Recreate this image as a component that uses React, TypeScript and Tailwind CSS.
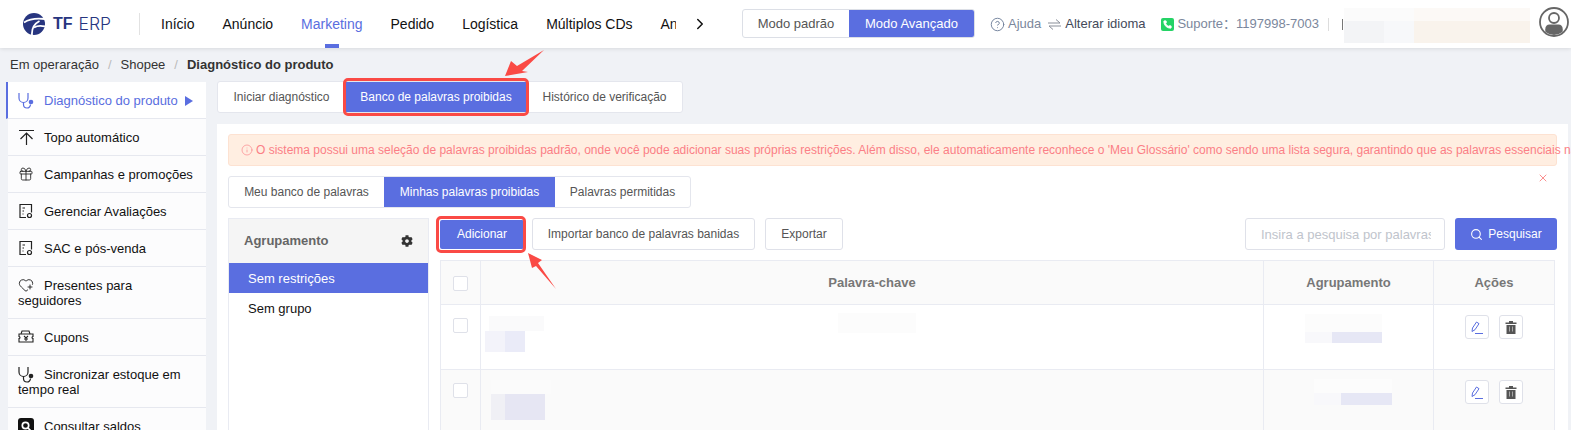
import { ChevronRight, Search, X, Info, CircleHelp, Phone, Gift, HeartPlus } from 'lucide-react'
import { FaCog } from 'react-icons/fa'
import type { ReactNode } from 'react'

const navItems = ['Início', 'Anúncio', 'Marketing', 'Pedido', 'Logística', 'Múltiplos CDs', 'Análise']

function DocIcon() {
  return (
    <svg width="16" height="16" viewBox="0 0 16 16" fill="none" stroke="#222" strokeWidth="1.2">
      <path d="M8 14.500H2v-13h11.500v8" />
      <path d="M4.500 5h2.500M4.500 8h1.500M4.500 11h1" />
      <circle cx="11.500" cy="12.500" r="2" />
    </svg>
  )
}

function ScopeIcon({ color }: { color: string }) {
  return (
    <svg width="17" height="18" viewBox="0 0 17 18" fill="none" stroke={color} strokeWidth="1.2">
      <path d="M1 1v5a4.500 4.500 0 0 0 9 0V1" />
      <path d="M5.500 10.500v2a3.500 3.500 0 0 0 7 0" />
      <circle cx="13" cy="10" r="2.300" fill={color} stroke="none" />
    </svg>
  )
}

function TopIcon() {
  return (
    <svg width="17" height="17" viewBox="0 0 17 17" fill="none" stroke="#222" strokeWidth="1.2">
      <path d="M1 1.500h15M8.500 16V4.500M2.500 10l6-6 6 6" />
    </svg>
  )
}

function CouponIcon() {
  return (
    <svg width="16" height="16" viewBox="0 0 16 16" fill="none" stroke="#222" strokeWidth="1.1">
      <path d="M1 5h14v2.500a1 1 0 0 0 0 2V13H1V9.500a1 1 0 0 0 0-2z" />
      <path d="M3 5l1-3h7l1 3M6 7l2 2 2-2M8 9v3M6 10h4" />
    </svg>
  )
}

function BalanceIcon() {
  return (
    <svg width="16" height="16" viewBox="0 0 16 16">
      <rect width="16" height="16" rx="3" fill="#111" />
      <circle cx="7.500" cy="7.500" r="3.200" fill="none" stroke="#fff" strokeWidth="1.700" />
      <path d="M10 10l2.500 2.500" stroke="#fff" strokeWidth="1.700" />
    </svg>
  )
}

const menu: { label: string; icon: ReactNode; active?: boolean }[] = [
  { label: 'Diagnóstico do produto', icon: <ScopeIcon color="#5a6ee0" />, active: true },
  { label: 'Topo automático', icon: <TopIcon /> },
  { label: 'Campanhas e promoções', icon: <Gift size={16} strokeWidth={1.3} className="text-[#222]" /> },
  { label: 'Gerenciar Avaliações', icon: <DocIcon /> },
  { label: 'SAC e pós-venda', icon: <DocIcon /> },
  { label: 'Presentes para seguidores', icon: <HeartPlus size={16} strokeWidth={1.4} className="text-[#222]" /> },
  { label: 'Cupons', icon: <CouponIcon /> },
  { label: 'Sincronizar estoque em tempo real', icon: <ScopeIcon color="#222" /> },
  { label: 'Consultar saldos', icon: <BalanceIcon /> },
]

function EditIcon() {
  return (
    <svg width="15" height="15" viewBox="0 0 15 15" fill="none" stroke="#5a6ee0" strokeWidth="1">
      <path d="M2 11.500l.500-3.500 4-6 2.500 1.700-4 6zM5 13.500h8" />
    </svg>
  )
}

function TrashIcon() {
  return (
    <svg width="12" height="13" viewBox="0 0 12 13">
      <path d="M4 0h4v1.500h3.500V3H.5V1.500H4z" fill="#555" />
      <path d="M1.500 4h9v9h-9z" fill="#555" />
      <path d="M4.500 5.500v5M7.500 5.500v5" stroke="#a8a8a8" strokeWidth="1" />
    </svg>
  )
}

function TableRow({ tinted }: { tinted?: boolean }) {
  return (
    <div className={`flex h-[65px] border-b border-[#e9ebf2] ${tinted ? 'bg-[#fafafa]' : 'bg-white'}`}>
      <div className="w-[40px] shrink-0 border-r border-[#e9ebf2] pt-[13px] pl-[12px]">
        <div className="w-[15px] h-[15px] rounded-[2px] border border-[#dfe1e9] bg-white" />
      </div>
      {tinted ? (
        <div className="flex-1 border-r border-[#e9ebf2] pt-[10px] pl-[10px]">
          <div className="h-[14px] w-[60px] bg-[#fbfbfb]" />
          <div className="flex h-[26px] w-[54px]">
            <div className="w-[14px] bg-[#f0f0f5]" />
            <div className="flex-1 bg-[#e6e6f3]" />
          </div>
        </div>
      ) : (
        <div className="flex flex-1 items-start border-r border-[#e9ebf2] pt-[11px] pl-[4px]">
          <div>
            <div className="h-[15px] w-[55px] ml-[4px] bg-[#fafafb]" />
            <div className="flex h-[21px] w-[40px]">
              <div className="w-[20px] bg-[#f3f3fa]" />
              <div className="flex-1 bg-[#eaebf8]" />
            </div>
          </div>
          <div className="ml-[294px] -mt-[3px] h-[20px] w-[78px] bg-[#fcfcfc]" />
        </div>
      )}
      <div className={`w-[170px] shrink-0 border-r border-[#e9ebf2] pt-[9px] ${tinted ? 'pl-[50px]' : 'pl-[41px]'}`}>
        <div className={`${tinted ? 'h-[14px] w-[78px]' : 'h-[18px] w-[77px]'} bg-[#fcfcfc]`} />
        <div className={`flex ${tinted ? 'h-[12px] w-[78px]' : 'h-[11px] w-[77px]'}`}>
          <div className="w-[27px] bg-[#f8f8fb]" />
          <div className="flex-1 bg-[#e6e7f5]" />
        </div>
      </div>
      <div className="w-[120px] shrink-0 flex justify-center gap-[10px] pt-[10px]">
        <button className="w-[24px] h-[24px] rounded-[3px] border border-[#dfe1e9] bg-white flex items-center justify-center">
          <EditIcon />
        </button>
        <button className="w-[24px] h-[24px] rounded-[3px] border border-[#dfe1e9] bg-white flex items-center justify-center">
          <TrashIcon />
        </button>
      </div>
    </div>
  )
}

export default function App() {
  return (
    <div className="relative h-screen overflow-hidden bg-[#f0f2f6] text-[13px] text-[#111] font-['Liberation_Sans','Noto_Sans_CJK_SC',Arial,sans-serif]">
      <header className="flex items-center h-[48px] bg-white shadow-[0_1px_4px_rgba(0,0,0,0.1)] relative">
        <div className="flex items-center pl-[23px] w-[139px] shrink-0">
          <svg width="22" height="22" viewBox="0 0 22 22">
            <circle cx="11" cy="11" r="11" fill="#27357f" />
            <path d="M1 9.500C7 5.500 14 5 22 6" fill="none" stroke="#fff" strokeWidth="1.800" />
            <path d="M9 22C8.500 15 11 11 16.500 8" fill="none" stroke="#fff" strokeWidth="1.800" />
            <path d="M11 14.500C14.500 12.500 18 12.500 22 13.500" fill="none" stroke="#fff" strokeWidth="1.800" />
          </svg>
          <span className="ml-[8px] text-[16px] font-bold text-[#27357f]">TF</span>
          <span className="ml-[6px] text-[17.500px] font-['Inter'] font-light text-[#27357f]">ERP</span>
        </div>
        <div className="w-px h-[22px] bg-[#e2e2e2] shrink-0" />
        <nav className="flex w-[536px] h-full overflow-hidden shrink-0 pl-[21px] gap-[28px] text-[14px]">
          {navItems.map((item) => (
            <div key={item} className={`relative flex items-center h-full shrink-0 ${item === 'Marketing' ? 'text-[#5a6ee0]' : ''}`}>
              {item}
              {item === 'Marketing' && <span className="absolute bottom-0 left-[24px] w-[14px] h-[4px] bg-[#5a6ee0]" />}
            </div>
          ))}
        </nav>
        <ChevronRight size={18} className="shrink-0 ml-[15px]" />
        <div className="flex ml-[33px] -mt-[1px] h-[29px] shrink-0 rounded-[3px] border border-[#dcdfe6] overflow-hidden text-[13px]">
          <div className="w-[106px] flex items-center justify-center text-[#555]">Modo padrão</div>
          <div className="w-[125px] flex items-center justify-center bg-[#5a6ee0] text-white">Modo Avançado</div>
        </div>
        <div className="flex items-center ml-[15px] text-[13px] whitespace-nowrap">
          <CircleHelp size={15} className="text-[#6f7f9a]" strokeWidth={1.5} />
          <span className="ml-[3px] text-[#7b879c]">Ajuda</span>
          <svg className="ml-[7px]" width="13" height="11" viewBox="0 0 13 11" fill="none" stroke="#8a8f99" strokeWidth="1">
            <path d="M0 4h12L8 .5M13 7H1l4 3.500" />
          </svg>
          <span className="ml-[4px] text-[#444a5a]">Alterar idioma</span>
          <span className="ml-[16px] w-[13px] h-[13px] rounded-[2px] bg-[#25d366] flex items-center justify-center">
            <Phone size={9} fill="#fff" className="text-white" />
          </span>
          <span className="ml-[3px] text-[#7b879c]">Suporte：</span>
          <span className="text-[#7b879c]">1197998-7003</span>
          <span className="ml-[9px] w-px h-[13px] bg-[#ddd]" />
          <span className="ml-[13px] w-px h-[11px] bg-[#777]" />
        </div>
        <div className="ml-[1px] mt-[3px] w-[186px] h-[35px] shrink-0 flex flex-col">
          <div className="flex h-[13px]">
            <div className="w-[70px] bg-[#fbfbfb]" />
            <div className="flex-1 bg-[#fcf9f6]" />
          </div>
          <div className="flex h-[22px]">
            <div className="w-[40px] bg-[#f3f4f6]" />
            <div className="w-[30px] bg-[#f7f8fa]" />
            <div className="flex-1 bg-[#f9f3ec]" />
          </div>
        </div>
        <svg className="ml-[9px] -mt-[5px] shrink-0" width="30" height="30" viewBox="0 0 30 30" fill="none" stroke="#666">
          <circle cx="15" cy="15" r="14" strokeWidth="1.800" />
          <circle cx="15" cy="11" r="5" strokeWidth="1.800" />
          <path d="M6.500 25c-1-5 1-7.500 4-7.500h9c3 0 5 2.500 4 7.500a14 14 0 0 1-17 0z" fill="#666" stroke="none" />
        </svg>
      </header>

      <div className="h-[33px] pl-[10px] flex items-center text-[13px] text-[#333]">
        Em operaração<span className="mx-[9px] text-[#bbb]">/</span>Shopee<span className="mx-[9px] text-[#bbb]">/</span>
        <span className="font-bold">Diagnóstico do produto</span>
      </div>

      <div className="flex items-start pl-[6px]">
        <aside className="w-[200px] shrink-0 text-[13px] mt-px">
          {menu.map((m) => (
            <div
              key={m.label}
              className={`pl-[10px] pr-[10px] pt-[11px] pb-[10px] border-b border-[#e6e8ef] leading-[15px] ${m.active ? 'bg-white border-l-2 border-l-[#5a6ee0] text-[#5a6ee0]' : 'bg-[#fcfcfd] ml-[2px]'}`}
            >
              <span className="inline-block w-[26px] h-[15px] align-top -translate-y-px">{m.icon}</span>
              {m.label}
              {m.active && (
                <svg className="inline-block ml-[7px] align-[-1px]" width="8" height="10" viewBox="0 0 8 10">
                  <path d="M0 0l8 5-8 5z" fill="#5a6ee0" />
                </svg>
              )}
            </div>
          ))}
        </aside>

        <main className="ml-[11px] w-[1351px] shrink-0">
          <div className="inline-flex h-[32px] bg-white rounded-[3px] border border-[#e4e6ed] text-[12px]">
            <div className="w-[127px] flex items-center justify-center text-[#555]">Iniciar diagnóstico</div>
            <div className="w-[182px] flex items-center justify-center bg-[#5a6ee0] text-white">Banco de palavras proibidas</div>
            <div className="w-[155px] flex items-center justify-center text-[#555]">Histórico de verificação</div>
          </div>

          <div className="mt-[11px] bg-white pl-[11px] pr-[11px] pt-[10px] h-[400px]">
            <div className="h-[32px] pl-[12px] flex items-center gap-[3px] rounded-[3px] border border-[#fde2d2] bg-[#ffeee1] text-[12px] text-[#fb7f86] whitespace-nowrap">
              <Info size={12} strokeWidth={1.3} className="shrink-0" />
              O sistema possui uma seleção de palavras proibidas padrão, onde você pode adicionar suas próprias restrições. Além disso, ele automaticamente reconhece o 'Meu Glossário' como sendo uma lista segura, garantindo que as palavras essenciais não sejam bloqueadas.
            </div>
            <div className="flex justify-end h-[10px] pr-[8px] pt-[6px]">
              <X size={12} className="text-[#fb8f8f] shrink-0" />
            </div>

            <div className="inline-flex h-[32px] rounded-[3px] border border-[#e4e6ed] text-[12px]">
              <div className="w-[155px] flex items-center justify-center text-[#555]">Meu banco de palavras</div>
              <div className="w-[171px] flex items-center justify-center bg-[#5a6ee0] text-white">Minhas palavras proibidas</div>
              <div className="w-[135px] flex items-center justify-center text-[#555]">Palavras permitidas</div>
            </div>

            <div className="flex mt-[10px]">
              <div className="w-[201px] shrink-0 h-[300px] border-x border-[#e9ebf2]">
                <div className="flex items-center justify-between h-[45px] pl-[15px] pr-[15px] bg-[#f5f5f5] border-t border-[#e9ebf2] font-bold text-[13px] text-[#666]">
                  Agrupamento
                  <FaCog size={12} className="text-[#333]" />
                </div>
                <div className="h-[30px] pl-[19px] pt-px flex items-center bg-[#5a6ee0] text-white">Sem restrições</div>
                <div className="h-[30px] pl-[19px] pt-px flex items-center">Sem grupo</div>
              </div>

              <div className="flex-1 ml-[11px]">
                <div className="flex items-center h-[32px] text-[12px] text-[#555]">
                  <button className="w-[84px] h-[29px] rounded-[2px] bg-[#5a6ee0] text-white">Adicionar</button>
                  <button className="ml-[8px] w-[223px] h-[32px] rounded-[3px] border border-[#dfe1e9]">Importar banco de palavras banidas</button>
                  <button className="ml-[10px] w-[78px] h-[32px] rounded-[3px] border border-[#dfe1e9]">Exportar</button>
                  <input
                    placeholder="Insira a pesquisa por palavras-chave"
                    className="ml-auto w-[200px] h-[32px] rounded-[3px] border border-[#dfe1e9] pl-[15px] pr-[13px] text-[13px] placeholder:text-[#c0c4cc]"
                  />
                  <button className="ml-[10px] w-[102px] h-[32px] rounded-[3px] bg-[#5a6ee0] text-white flex items-center justify-center gap-[5px]">
                    <Search size={13} />
                    Pesquisar
                  </button>
                </div>

                <div className="mt-[10px] mr-[2px] border-x border-t border-[#e9ebf2]">
                  <div className="flex h-[44px] border-b border-[#e9ebf2] bg-[#fafafa] font-bold text-[13px] text-[#777]">
                    <div className="w-[40px] shrink-0 border-r border-[#e9ebf2] pt-[15px] pl-[12px]">
                      <div className="w-[15px] h-[15px] rounded-[2px] border border-[#dfe1e9] bg-white" />
                    </div>
                    <div className="flex-1 flex items-center justify-center border-r border-[#e9ebf2]">Palavra-chave</div>
                    <div className="w-[170px] shrink-0 flex items-center justify-center border-r border-[#e9ebf2]">Agrupamento</div>
                    <div className="w-[120px] shrink-0 flex items-center justify-center">Ações</div>
                  </div>
                  <TableRow />
                  <TableRow tinted />
                </div>
              </div>
            </div>
          </div>
        </main>
      </div>

      {/* red highlight boxes and arrows drawn over the page */}
      <div className="absolute left-[343px] top-[78px] w-[186px] h-[38px] rounded-[5px] border-[3px] border-[#fa4a45]" />
      <div className="absolute left-[436px] top-[216px] w-[90px] h-[37px] rounded-[5px] border-[3px] border-[#fa4a45]" />
      <svg className="absolute left-[500px] top-[45px]" width="46" height="34" viewBox="0 0 46 34">
        <polygon points="5,31 11,16 17,21 44,5 22,26 28,27" fill="#fa4a45" />
      </svg>
      <svg className="absolute left-[525px] top-[250px]" width="34" height="42" viewBox="0 0 34 42">
        <polygon points="3,3 17,10 13,13 31,39 11,16 7,18" fill="#fa4a45" />
      </svg>
    </div>
  )
}
